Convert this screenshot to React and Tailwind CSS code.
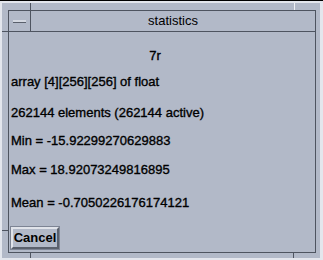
import React from 'react';

const rows = [
  { text: 'array [4][256][256] of float', mt: 'mt-[12px]' },
  { text: '262144 elements (262144 active)', mt: 'mt-[17px]' },
  { text: 'Min = -15.92299270629883', mt: 'mt-[14px]' },
  { text: 'Max = 18.92073249816895', mt: 'mt-[15px]' },
  { text: 'Mean = -0.7050226176174121', mt: 'mt-[19px]' },
];

const App = () => {
  return (
    <div className="w-[323px] h-[260px] bg-[#e3e6ed] border-t border-black pt-[2px] pl-[2px] font-['Liberation_Sans',sans-serif] text-black">
      <div className="relative w-[318px] h-[255px] bg-[#b2b9c8] pt-[7px] pl-[6px]">
        {/* resize handle ticks */}
        <div className="absolute left-[28px] top-0 w-px h-[7px] bg-[#4e5460]" />
        <div className="absolute left-[292px] top-0 w-px h-[7px] bg-[#eef0f4]" />
        <div className="absolute left-0 top-[28px] w-[6px] h-px bg-[#4e5460]" />
        <div className="absolute left-0 top-[227px] w-[6px] h-px bg-[#4e5460]" />
        <div className="absolute left-[28px] bottom-0 w-px h-[5px] bg-[#4e5460]" />
        <div className="absolute left-[291px] bottom-0 w-px h-[5px] bg-[#4e5460]" />

        <div className="w-[308px] h-[243px] border border-[#4e5460] flex flex-col">
          <div className="h-[21px] flex border-b border-[#4e5460]">
            <div className="w-[22px] border-r border-[#4e5460] flex items-center justify-center">
              <div className="w-[13px] h-[3px] bg-[#d4d8e1] border-b border-[#5a606c]" />
            </div>
            <div className="flex-1 text-center text-[13px] leading-[20px]">statistics</div>
          </div>

          <div className="flex-1 flex flex-col items-start pl-[2px] text-[13px] leading-[14px] [-webkit-text-stroke:0.35px_black]">
            <div className="mt-[17px] self-stretch text-center pr-[16px]">7r</div>
            {rows.map((r) => (
              <div key={r.text} className={r.mt}>{r.text}</div>
            ))}
            <button className="mt-[17px] w-[48px] h-[22px] bg-[#b2b9c8] border-2 border-t-[#e0e3ea] border-l-[#e0e3ea] border-b-[#5a606c] border-r-[#5a606c] outline outline-1 outline-[#7d8494] text-[13px] font-bold leading-[18px] text-center [-webkit-text-stroke:0px]">
              Cancel
            </button>
          </div>
        </div>
      </div>
    </div>
  );
};

export default App;
